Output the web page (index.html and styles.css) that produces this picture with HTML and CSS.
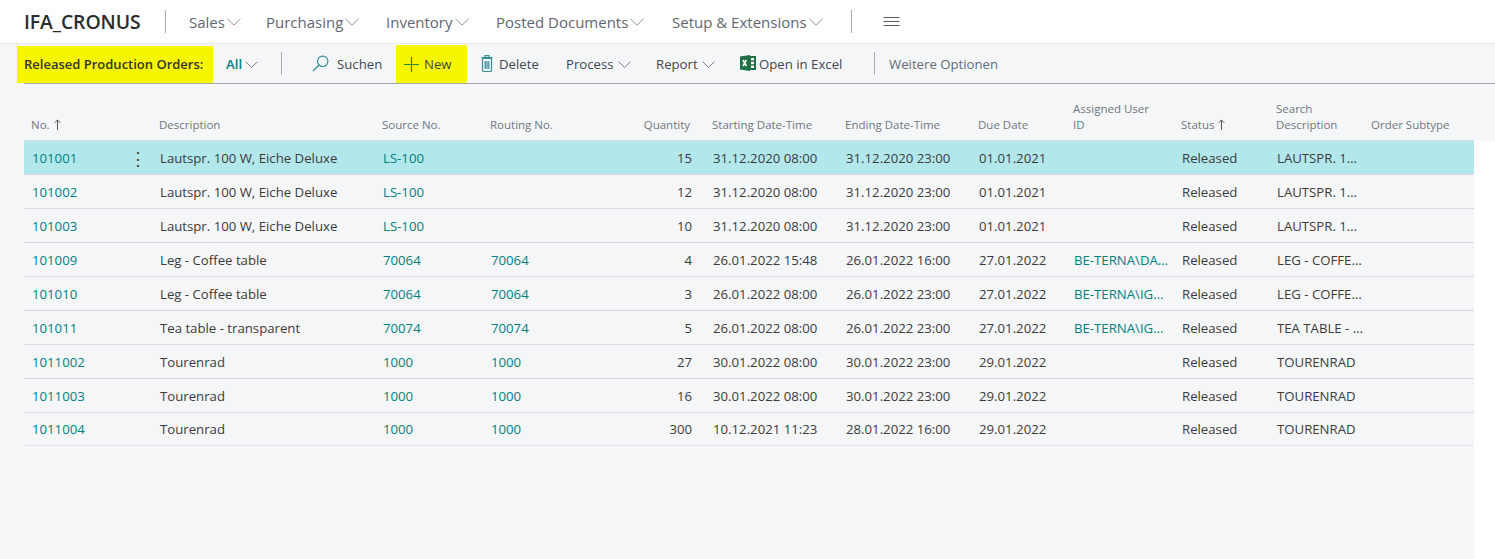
FILE: index.html
```html
<!DOCTYPE html>
<html lang="en">
<head>
<meta charset="utf-8">
<title>Released Production Orders</title>
<link rel="stylesheet" href="styles.css">
</head>
<body>
<header class="nav">
  <div class="brand">IFA_CRONUS</div>
  <span class="nav-sep"></span>
  <a class="nav-item n1">Sales<svg class="chev-lg" viewBox="0 0 14 8"><path d="M.5.8 7 7.2 13.5.8"/></svg></a>
  <a class="nav-item n2">Purchasing<svg class="chev-lg" viewBox="0 0 14 8"><path d="M.5.8 7 7.2 13.5.8"/></svg></a>
  <a class="nav-item n3">Inventory<svg class="chev-lg" viewBox="0 0 14 8"><path d="M.5.8 7 7.2 13.5.8"/></svg></a>
  <a class="nav-item n4">Posted Documents<svg class="chev-lg" viewBox="0 0 14 8"><path d="M.5.8 7 7.2 13.5.8"/></svg></a>
  <a class="nav-item n5">Setup &amp; Extensions<svg class="chev-lg" viewBox="0 0 14 8"><path d="M.5.8 7 7.2 13.5.8"/></svg></a>
  <span class="nav-sep sep2"></span>
  <svg class="burger" viewBox="0 0 16 10"><path d="M0 .5h16M0 4.5h16M0 8.5h16"/></svg>
</header>

<div class="toolbar-wrap">
<div class="toolbar">
  <div class="page-title">Released Production Orders:</div>
  <button class="filter">All<svg class="chev" viewBox="0 0 13 7"><path d="M.5.6 6.5 6.4 12.5.6"/></svg></button>
  <span class="tb-sep"></span>
  <button class="act search"><svg class="ico" width="17" height="17" viewBox="0 0 17 17"><circle cx="10.700" cy="6.300" r="5.200"/><path d="M7 10 1 16"/></svg>Suchen</button>
  <button class="act new"><svg class="ico" width="15" height="15" viewBox="0 0 15 15"><path class="plus" d="M7.500 0v15M0 7.500h15"/></svg>New</button>
  <button class="act delete"><svg class="ico" width="12" height="17" viewBox="0 0 12 17"><path d="M1.500 3.500h9v11.500a1.500 1.500 0 0 1-1.500 1.500H3A1.500 1.500 0 0 1 1.500 15zM.5 2.500h11M4 2.500V.7h4v1.800M4.200 6v8M6 6v8M7.800 6v8"/></svg>Delete</button>
  <button class="act process">Process<svg class="chev" viewBox="0 0 13 7"><path d="M.5.6 6.5 6.400 12.500.6"/></svg></button>
  <button class="act report">Report<svg class="chev" viewBox="0 0 13 7"><path d="M.5.6 6.5 6.400 12.500.6"/></svg></button>
  <button class="act excel"><svg class="xl" width="16" height="16" viewBox="0 0 16 16"><rect class="xl-green" x="9" y="1" width="7" height="14"/><rect class="xl-cell" x="11" y="3" width="3" height="2.400"/><rect class="xl-cell" x="11" y="6.800" width="3" height="2.400"/><rect class="xl-cell" x="11" y="10.600" width="3" height="2.400"/><path class="xl-green" d="M0 1.500 10 0v16L0 14.500z"/><path class="xl-x" d="m3 5 3.400 6m0-6L3 11"/></svg>Open in Excel</button>
  <span class="tb-sep sep2"></span>
  <button class="more">Weitere Optionen</button>
</div>
</div>

<section class="list-head">
  <div class="grid">
    <div class="th span2">No.<svg class="arrow" viewBox="0 0 7 11"><path d="M3.500 11V1M.7 3.800 3.500 1l2.800 2.800"/></svg></div>
    <div class="th">Description</div>
    <div class="th">Source No.</div>
    <div class="th">Routing No.</div>
    <div class="th num">Quantity</div>
    <div class="th">Starting Date-Time</div>
    <div class="th">Ending Date-Time</div>
    <div class="th">Due Date</div>
    <div class="th">Assigned User<br>ID</div>
    <div class="th">Status<svg class="arrow" viewBox="0 0 7 11"><path d="M3.500 11V1M.7 3.800 3.500 1l2.800 2.800"/></svg></div>
    <div class="th">Search<br>Description</div>
    <div class="th">Order Subtype</div>
  </div>
</section>

<main class="list-body" id="rows"></main>
<script src="app.js"></script>
</body>
</html>
```

FILE: app.js
```js
var data = [
  ["101001","Lautspr. 100 W, Eiche Deluxe","LS-100","","15","31.12.2020 08:00","31.12.2020 23:00","01.01.2021","","LAUTSPR. 100 W, EICHE"],
  ["101002","Lautspr. 100 W, Eiche Deluxe","LS-100","","12","31.12.2020 08:00","31.12.2020 23:00","01.01.2021","","LAUTSPR. 100 W, EICHE"],
  ["101003","Lautspr. 100 W, Eiche Deluxe","LS-100","","10","31.12.2020 08:00","31.12.2020 23:00","01.01.2021","","LAUTSPR. 100 W, EICHE"],
  ["101009","Leg - Coffee table","70064","70064","4","26.01.2022 15:48","26.01.2022 16:00","27.01.2022","BE-TERNA\\DANIEL","LEG - COFFEE TABLE"],
  ["101010","Leg - Coffee table","70064","70064","3","26.01.2022 08:00","26.01.2022 23:00","27.01.2022","BE-TERNA\\IGOR.M","LEG - COFFEE TABLE"],
  ["101011","Tea table - transparent","70074","70074","5","26.01.2022 08:00","26.01.2022 23:00","27.01.2022","BE-TERNA\\IGOR.M","TEA TABLE - TRANSPARENT"],
  ["1011002","Tourenrad","1000","1000","27","30.01.2022 08:00","30.01.2022 23:00","29.01.2022","","TOURENRAD"],
  ["1011003","Tourenrad","1000","1000","16","30.01.2022 08:00","30.01.2022 23:00","29.01.2022","","TOURENRAD"],
  ["1011004","Tourenrad","1000","1000","300","10.12.2021 11:23","28.01.2022 16:00","29.01.2022","","TOURENRAD"]
];
function cell(text, cls) {
  var d = document.createElement("div");
  d.className = "td" + (cls ? " " + cls : "");
  d.textContent = text;
  return d;
}
var host = document.getElementById("rows");
data.forEach(function (r, i) {
  var row = document.createElement("div");
  row.className = "grid row" + (i === 0 ? " selected" : "") + (i === data.length - 1 ? " last" : "");
  row.appendChild(cell(r[0], "link"));
  row.appendChild(cell(i === 0 ? "⋮" : "", "menu"));
  row.appendChild(cell(r[1]));
  row.appendChild(cell(r[2], "link"));
  row.appendChild(cell(r[3], "link"));
  row.appendChild(cell(r[4], "num"));
  row.appendChild(cell(r[5]));
  row.appendChild(cell(r[6]));
  row.appendChild(cell(r[7]));
  row.appendChild(cell(r[8], "link user"));
  row.appendChild(cell("Released"));
  row.appendChild(cell(r[9]));
  row.appendChild(cell(""));
  host.appendChild(row);
});
```

FILE: styles.css
```css
* { box-sizing: border-box; }
html, body { margin: 0; height: 559px; overflow: hidden; }
body {
  background: #fff;
  font-family: "Open Sans", "Noto Sans", sans-serif;
  font-size: 13.2px;
  color: #333;
  --cols: 104px 24px 223px 108px 117px 105px 133px 133px 95px 108px 95px 95px 110px;
}
svg { fill: none; stroke: currentColor; flex: none; }

.nav {
  height: 44px;
  display: flex;
  align-items: center;
  padding-left: 24px;
  background: #fff;
  border-bottom: 1px solid #e6e8ec;
}
.brand { font-size: 19.4px; font-weight: 600; color: #2b2b2b; width: 141px; letter-spacing: -.1px; }
.nav-sep { width: 1px; height: 23px; background: #a7abb2; }
.nav-sep.sep2 { margin-left: 26px; }
.nav-item { display: flex; align-items: center; font-size: 15px; color: #5f6672; white-space: nowrap; }
.n1 { margin-left: 23px; width: 77px; }
.n2 { width: 120px; }
.n3 { width: 110px; }
.n4 { width: 176px; }
.n5 { width: 153px; }
.chev-lg { width: 14px; height: 8px; margin-left: 2px; margin-top: 1px; color: #8c929c; }
.burger { width: 17px; height: 10px; margin-left: 31px; color: #555c68; }

.toolbar-wrap { padding-left: 24px; background: #f5f6f8; }
.toolbar {
  height: 40px;
  display: flex;
  align-items: stretch;
  border-bottom: 1px solid #a6a8ab;
}
.page-title {
  margin-left: -7px;
  width: 196px;
  padding: 0 0 1px 7px;
  margin-top: 2px;
  display: flex;
  align-items: center;
  background: #f6f600;
  font-size: 13px;
  font-weight: 600;
  color: #333;
  white-space: nowrap;
}
.toolbar button {
  font: inherit;
  background: none;
  border: 0;
  padding: 0;
  display: flex;
  align-items: center;
  color: #3f4650;
  white-space: nowrap;
}
.toolbar .filter { margin-left: 13px; width: 55px; color: #00807f; font-weight: 600; }
.chev { width: 13px; height: 7px; margin-left: 4px; margin-top: 2px; color: #7d838d; }
.filter .chev { margin-left: 3px; }
.tb-sep { width: 1px; height: 23px; background: #a7abb2; align-self: center; }
.ico { color: #2f8f95; stroke-width: 1.200; }
.toolbar .search { margin-left: 30px; width: 84px; }
.search .ico { margin-right: 8px; }
.toolbar .new { width: 71px; padding-left: 8px; background: #f6f600; margin-top: 1px; }
.new .ico { margin-right: 5px; }
.plus { stroke: #1c8c3c; }
.toolbar .delete { margin-left: 14px; width: 85px; }
.delete .ico { margin-right: 6px; }
.toolbar .process { width: 90px; }
.toolbar .report { width: 84px; }
.toolbar .excel { width: 134px; gap: 3px; }
.xl { margin-top: -1px; }
.xl-green { fill: #1e7145; stroke: none; }
.xl-cell { fill: #fff; stroke: none; }
.xl-x { stroke: #fff; stroke-width: 1.600; }
.toolbar .more { margin-left: 14px; color: #646b76; }

.list-head { height: 57px; background: #f5f6f8; }
.list-body { width: 1474px; height: 419px; background: #f5f6f8; }
.list-head, .list-body { padding-left: 24px; }
.grid { display: grid; grid-template-columns: var(--cols); }
.list-head .grid { height: 57px; align-items: end; border-bottom: 1px solid #d8dadd; width: 1450px; padding-bottom: 7px; }
.th {
  font-size: 11.5px;
  line-height: 16px;
  color: #6f7680;
  padding: 0 0 0 7px;
}
.th.span2 { grid-column: span 2; }
.th.num { text-align: right; padding-right: 15px; }
.arrow { width: 7px; height: 11px; margin-left: 4px; vertical-align: -1px; color: #555; }

.row { height: 34px; border-bottom: 1px solid #d8dadd; align-items: center; }
.row.last { height: 33px; border-bottom-color: #e4e5e8; }
.row.selected { background: #b2e8eb; }
.td {
  padding: 1px 0 0 8px;
  line-height: 32px;
  white-space: nowrap;
  overflow: hidden;
  text-overflow: ellipsis;
  color: #3b3b3b;
}
.last .td { padding-top: 0; }
.td.link { color: #00807f; }
.td.user { padding-right: 4px; }
.td.num { text-align: right; padding-right: 13px; }
.td.menu { padding: 1px 4px 0 0; text-align: center; font-size: 18px; color: #444; }
```
